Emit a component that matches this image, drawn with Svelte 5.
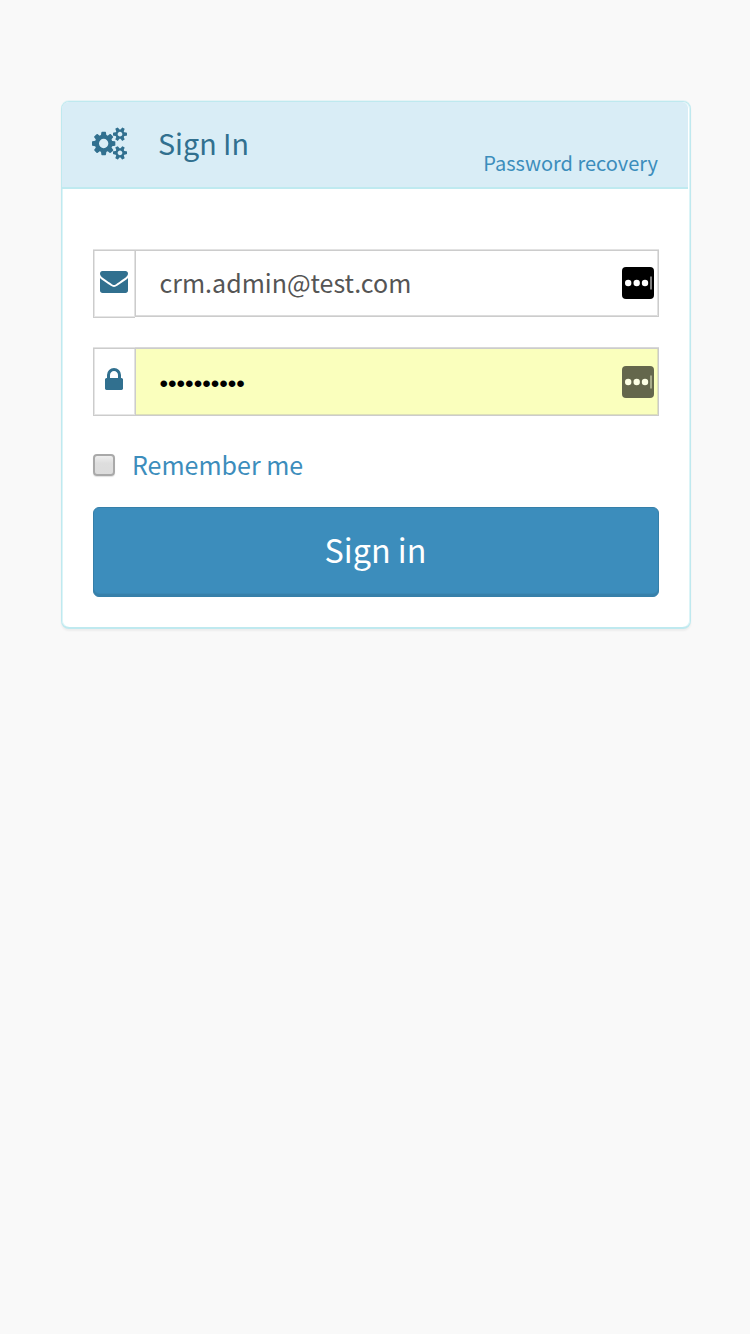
<script>
  let email = $state('crm.admin@test.com');
  let password = $state('••••••••••');
</script>

{#snippet keyBadge(faded)}
  <svg class="badge" class:faded viewBox="0 0 32 32" aria-hidden="true">
    <rect width="32" height="32" rx="4" fill={faded ? '#64674c' : '#000'} />
    <g fill={faded ? '#fdffe4' : '#fff'}>
      <circle cx="6.2" cy="16" r="3.2" />
      <circle cx="14.7" cy="16" r="3.2" />
      <circle cx="23" cy="16" r="3.2" />
    </g>
    <rect x="28.2" y="9.5" width="1.6" height="13" fill={faded ? '#b9bc99' : '#999'} />
  </svg>
{/snippet}

<main>
  <section class="panel">
    <header>
      <svg class="cogs" viewBox="-64 0 1920 1792" aria-hidden="true">
        <path d="M832 896q0-106-75-181t-181-75-181 75-75 181 75 181 181 75 181-75 75-181zm768 512q0-52-38-90t-90-38-90 38-38 90q0 53 37.5 90.5t90.5 37.5 90.5-37.5 37.5-90.5zm0-1024q0-52-38-90t-90-38-90 38-38 90q0 53 37.5 90.5t90.5 37.5 90.5-37.5 37.5-90.5zm-384 421v185q0 10-7 19.5t-16 10.5l-155 24q-11 35-32 76 34 48 90 115 7 11 7 20 0 12-7 19-23 30-82.5 89.5t-78.5 59.5q-11 0-21-7l-115-90q-37 19-77 31-11 108-23 155-7 24-30 24h-186q-11 0-20-7.5t-10-17.5l-23-153q-34-10-75-31l-118 89q-7 7-20 7-11 0-21-8-144-133-144-160 0-9 7-19 10-14 41-53t47-61q-23-44-35-82l-152-24q-10-1-17-9.5t-7-19.5v-185q0-10 7-19.5t16-10.5l155-24q11-35 32-76-34-48-90-115-7-11-7-20 0-12 7-20 22-30 82-89t79-59q11 0 21 7l115 90q34-18 77-32 11-108 23-154 7-24 30-24h186q11 0 20 7.5t10 17.5l23 153q34 10 75 31l118-89q8-7 20-7 11 0 21 8 144 133 144 160 0 8-7 19-12 16-42 54t-45 60q23 48 34 82l152 23q10 2 17 10.5t7 19.5zm640 533v140q0 16-149 31-12 27-30 52 51 113 51 138 0 4-4 7-122 71-124 71-8 0-46-47t-52-68q-20 2-30 2t-30-2q-14 21-52 68t-46 47q-2 0-124-71-4-3-4-7 0-25 51-138-18-25-30-52-149-15-149-31v-140q0-16 149-31 13-29 30-52-51-113-51-138 0-4 4-7 4-2 35-20t59-34 30-16q8 0 46 46.5t52 67.5q20-2 30-2t30 2q51-71 92-112l6-2q4 0 124 70 4 3 4 7 0 25-51 138 17 23 30 52 149 15 149 31zm0-1024v140q0 16-149 31-12 27-30 52 51 113 51 138 0 4-4 7-122 71-124 71-8 0-46-47t-52-68q-20 2-30 2t-30-2q-14 21-52 68t-46 47q-2 0-124-71-4-3-4-7 0-25 51-138-18-25-30-52-149-15-149-31v-140q0-16 149-31 13-29 30-52-51-113-51-138 0-4 4-7 4-2 35-20t59-34 30-16q8 0 46 46.5t52 67.5q20-2 30-2t30 2q51-71 92-112l6-2q4 0 124 70 4 3 4 7 0 25-51 138 17 23 30 52 149 15 149 31z" />
      </svg>
      <h1>Sign In</h1>
      <a class="recover" href="#recover">Password recovery</a>
    </header>

    <form onsubmit={(e) => e.preventDefault()}>
      <div class="row">
        <span class="addon">
          <svg class="mail" viewBox="0 0 1792 1792" aria-hidden="true">
            <path d="M1792 710v794q0 66-47 113t-113 47h-1472q-66 0-113-47t-47-113v-794q44 49 101 87 362 246 497 345 57 42 92.5 65.5t94.5 48 110 24.5h2q51 0 110-24.5t94.5-48 92.5-65.5q170-123 498-345 57-39 100-87zm0-294q0 79-49 151t-122 123q-376 261-468 325-10 7-42.5 31t-54 38.5-52 32.5-57.5 27-50 9h-2q-23 0-50-9t-57.5-27-52-32.5-54-38.5-42.5-31q-91-64-262-182.5t-205-142.5q-62-42-117-115.5t-55-136.5q0-78 41.5-130t118.5-52h1472q65 0 112.5 47t47.5 113z" />
          </svg>
        </span>
        <div class="field">
          <span class="value">{email}</span>
          {@render keyBadge(false)}
        </div>
      </div>

      <div class="row second">
        <span class="addon">
          <svg class="lock" viewBox="0 0 1792 1792" aria-hidden="true">
            <path d="M640 768h512v-192q0-106-75-181t-181-75-181 75-75 181v192zm832 96v576q0 40-28 68t-68 28h-960q-40 0-68-28t-28-68v-576q0-40 28-68t68-28h32v-192q0-184 132-316t316-132 316 132 132 316v192h32q40 0 68 28t28 68z" />
          </svg>
        </span>
        <div class="field filled">
          <span class="value dots">{password}</span>
          {@render keyBadge(true)}
        </div>
      </div>

      <label><span class="check"></span><span class="remember">Remember me</span></label>
      <button type="submit">Sign in</button>
    </form>
  </section>
</main>

<style>
  :global(body) {
    margin: 0;
    background: #f9f9f9;
  }
  * {
    box-sizing: border-box;
  }
  main {
    min-height: 1334px;
    padding: 101px 59px 0 61px;
    background: #f9f9f9;
    font-family: 'Noto Sans CJK SC', 'Open Sans', sans-serif;
  }
  .panel {
    height: 528px;
    border: 1px solid #bfe9ef;
    border-bottom-width: 2px;
    border-radius: 8px;
    background: #fff;
    box-shadow:
      inset 1px 0 0 #dcf4f7,
      inset -1px 0 0 #dcf4f7,
      0 -1px 0 #e6f4f6,
      0 2px 2px rgba(0, 0, 0, 0.05);
  }
  header {
    display: flex;
    width: 626px;
    height: 87px;
    padding-left: 30px;
    border-bottom: 2px solid #bfeaf0;
    border-radius: 7px 6px 0 0;
    background: #d9edf6;
    color: #31708f;
  }
  svg {
    display: block;
    flex: none;
    fill: #31708f;
  }
  .cogs {
    width: 35px;
    height: 33px;
    margin-top: 25px;
  }
  h1 {
    margin: 19px 0 0 31px;
    font-size: 28.7px;
    font-weight: 400;
    line-height: 44px;
  }
  .recover {
    margin: 44px 30px 0 auto;
    color: #3c8dbc;
    font-size: 20px;
    line-height: 34px;
    text-decoration: none;
  }
  form {
    padding: 61px 31px 0;
  }
  .row {
    display: flex;
    height: 67px;
    align-items: flex-start;
  }
  .row.second {
    margin-top: 31px;
  }
  .addon {
    width: 42px;
    height: 68px;
    flex: none;
    padding: 16px 0 0 6px;
    border: 1px solid #ccc;
    border-right: 0;
    box-shadow:
      0 -1px 0 #e2e2e2,
      inset 1px 0 0 #e6e6e6,
      inset -1px 0 0 #e2e2e2,
      inset 0 -1px 0 #e6e6e6;
  }
  .second .addon {
    padding-top: 17px;
  }
  .mail,
  .lock {
    width: 28px;
    height: 28px;
  }
  .field {
    display: flex;
    height: 67px;
    flex: 1;
    justify-content: space-between;
    padding: 0 4px 0 23.5px;
    border: 1px solid #ccc;
    box-shadow:
      0 -1px 0 #e2e2e2,
      inset -1px 0 0 #e2e2e2,
      inset 0 -1px 0 #dcdcdc;
  }
  .field.filled {
    height: 68px;
    background: #faffbd;
    box-shadow:
      0 -1px 0 #d8d8d8,
      inset -1px 0 0 #e0e3b8,
      inset 0 -1px 0 #dde0b8;
  }
  .value {
    color: #555;
    font-size: 25px;
    line-height: 63px;
  }
  .value.dots {
    color: #000;
    font-family: 'Liberation Sans', sans-serif;
    font-size: 24.4px;
    line-height: 70px;
  }
  .badge {
    width: 32px;
    height: 32px;
    margin-top: 16px;
  }
  .badge.faded {
    margin-top: 17px;
  }
  label {
    display: flex;
    height: 40px;
    align-items: flex-start;
    margin-top: 31px;
    color: #3c8dbc;
    font-size: 25px;
    line-height: 36px;
  }
  .check {
    width: 22px;
    height: 22px;
    margin: 8px 17px 0 0;
    border: 2px solid #a9a9a9;
    border-radius: 4px;
    background: linear-gradient(#eee, #dedede 40%, #dcdcdc);
    box-shadow: 0 1px 1px rgba(0, 0, 0, 0.12);
  }
  button {
    display: block;
    width: 100%;
    height: 90px;
    margin-top: 21px;
    padding: 0 1px 6px 0;
    border: 1px solid #367fa9;
    border-radius: 6px;
    background: #3c8dbc;
    box-shadow:
      inset 0 -2px 0 #3780aa,
      inset 0 -3px 0 #3a88b5;
    color: #fff;
    font: 400 32.3px/80px 'Noto Sans CJK SC', 'Open Sans', sans-serif;
  }
</style>
